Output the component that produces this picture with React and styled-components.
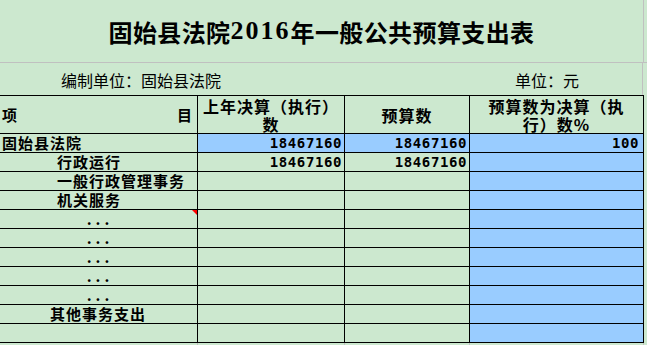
import React from 'react';
import styled, { createGlobalStyle } from 'styled-components';

const Global = createGlobalStyle`
  body {
    margin: 0;
    background: #cce8cf;
    font-family: "Noto Sans CJK SC", "Noto Sans", sans-serif;
    color: #000;
  }
`;

const Sheet = styled.div`
  width: 647px;
  height: 345px;
  overflow: hidden;
`;

const BandRow = styled.div`
  display: flex;
  height: ${p => p.h}px;
  border-bottom: ${p => (p.line ? '1px solid #c0c0c0' : 'none')};
`;

const Title = styled.div`
  width: 643px;
  border-right: 1px solid #c0c0c0;
  display: flex;
  align-items: center;
  justify-content: center;
  font-size: 24px;
  font-weight: 700;
  letter-spacing: 0.4px;
`;

const Digits = styled.span`
  font-family: "Liberation Serif", serif;
  font-size: 26px;
  letter-spacing: 2px;
`;

const Unit = styled.div`
  width: 643px;
  border-right: 1px solid #c0c0c0;
  display: flex;
  align-items: center;
  justify-content: space-between;
  padding: 2px 63px 0 61px;
  box-sizing: border-box;
  font-size: 16px;
`;

const Grid = styled.div`
  display: grid;
  width: 644px;
  box-sizing: border-box;
  grid-template-columns: 197px 146px 124px 173px;
  grid-template-rows: ${p => (p.ghost ? '18px' : '37px')};
  grid-auto-rows: 18px;
  gap: 1px;
  padding: ${p => (p.ghost ? '0 1px 0 0' : '1px 1px 1px 0')};
  background: ${p => (p.ghost ? '#c0c0c0' : '#000')};
`;

const Cell = styled.div`
  position: relative;
  display: flex;
  align-items: center;
  justify-content: ${p => p.align || 'flex-start'};
  padding: 0 ${p => p.pr ?? 3}px 0 ${p => p.pl ?? 2}px;
  background: ${p => (p.blue ? '#99ccff' : '#cce8cf')};
  font-size: 15px;
  font-weight: 700;
  letter-spacing: 1px;
  line-height: 18px;
  white-space: nowrap;

  ${p =>
    p.flag &&
    `&::after {
      content: '';
      position: absolute;
      top: 0;
      right: 0;
      border-top: 5px solid #ff0000;
      border-left: 5px solid transparent;
    }`}
`;

const HeadCell = styled(Cell)`
  flex-direction: column;
  justify-content: center;
  align-items: center;
  text-align: center;
  font-size: 16px;
  line-height: 18px;
  white-space: normal;
  padding: 0;
`;

const Num = styled.span`
  font-family: "DejaVu Sans Mono", monospace;
  font-size: 14px;
  letter-spacing: 0.6px;
`;

const Dots = styled.span`
  letter-spacing: 4px;
  margin-right: -4px;
`;

const rows = [
  { name: '固始县法院', blue: true, last: '18467160', budget: '18467160', pct: '100' },
  { name: '行政运行', indent: true, last: '18467160', budget: '18467160' },
  { name: '一般行政管理事务', indent: true },
  { name: '机关服务', indent: true },
  { dots: true, flag: true },
  { dots: true },
  { dots: true },
  { dots: true },
  { dots: true },
  { name: '其他事务支出', center: true },
  {},
];

export default function App() {
  return (
    <Sheet>
      <Global />
      <BandRow h={62} line>
        <Title>
          固始县法院<Digits>2016</Digits>年一般公共预算支出表
        </Title>
      </BandRow>
      <BandRow h={32}>
        <Unit>
          <span>编制单位：固始县法院</span>
          <span>单位：元</span>
        </Unit>
      </BandRow>
      <Grid>
        <Cell align="space-between" pr={4}>
          <span>项</span>
          <span>目</span>
        </Cell>
        <HeadCell>
          <span>上年决算（执行）</span>
          <span>数</span>
        </HeadCell>
        <HeadCell>预算数</HeadCell>
        <HeadCell>
          <span>预算数为决算（执</span>
          <span>行）数%</span>
        </HeadCell>

        {rows.map((r, i) => (
          <React.Fragment key={i}>
            <Cell
              flag={r.flag}
              pl={r.indent ? 57 : 2}
              align={r.dots || r.center ? 'center' : 'flex-start'}
            >
              {r.dots ? <Dots>...</Dots> : r.name}
            </Cell>
            <Cell blue={r.blue} align="flex-end" pr={2}>
              {r.last && <Num>{r.last}</Num>}
            </Cell>
            <Cell blue={r.blue} align="flex-end" pr={2}>
              {r.budget && <Num>{r.budget}</Num>}
            </Cell>
            <Cell blue align="flex-end" pr={4}>
              {r.pct && <Num>{r.pct}</Num>}
            </Cell>
          </React.Fragment>
        ))}
      </Grid>
      <Grid ghost>
        <Cell />
        <Cell />
        <Cell />
        <Cell />
      </Grid>
    </Sheet>
  );
}
